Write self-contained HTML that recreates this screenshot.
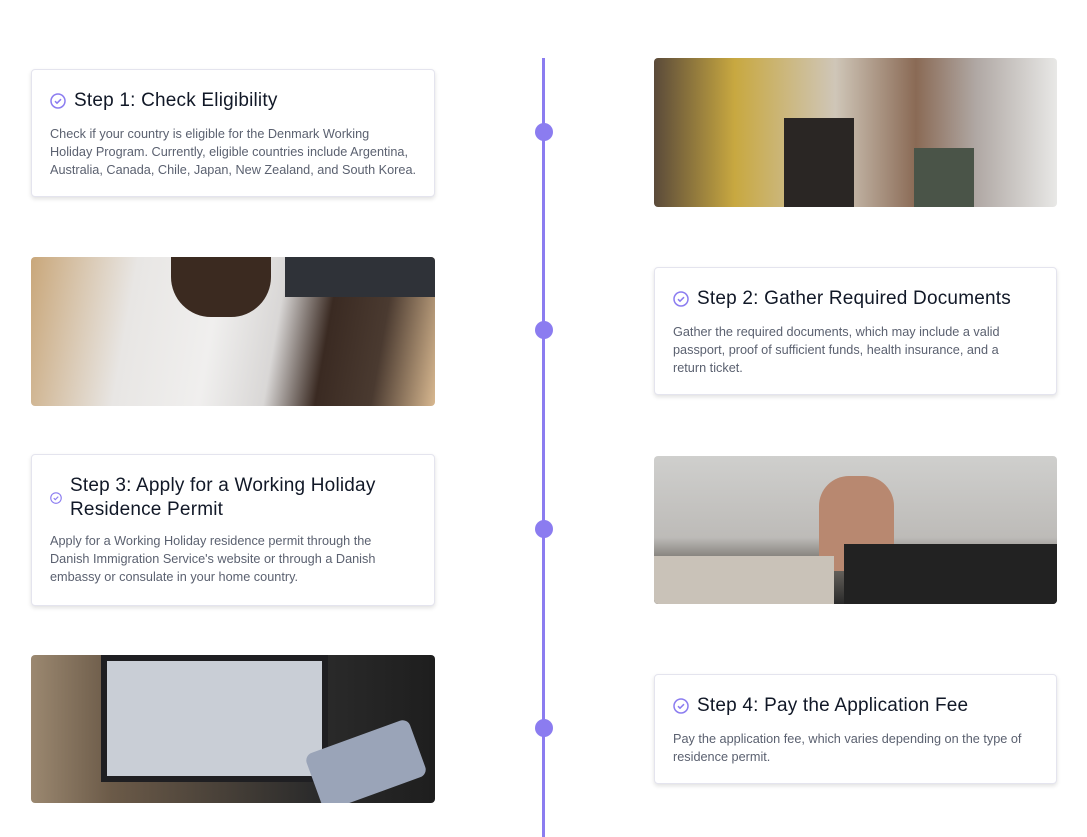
<!DOCTYPE html>
<html><head><style>
body{margin:0;background:#fff;width:1087px;height:837px;position:relative;overflow:hidden;font-family:"Liberation Sans",sans-serif}
.card{position:absolute;background:#fff;border:1px solid #e4e4ee;border-radius:4px;box-shadow:0 2px 4px rgba(0,0,0,.12);box-sizing:border-box;padding:0 14px 0 18px}
.t{display:flex;align-items:center;font-size:19px;letter-spacing:0.2px;color:#111827;line-height:24px}
.t svg{flex:none;margin-right:8px}
.p{font-size:12.7px;color:#5b6170;line-height:18px;margin-top:12px}
.img{position:absolute;border-radius:4px;overflow:hidden}
.line{position:absolute;left:542px;top:58px;width:3px;height:779px;background:#8b7cf0}
.dot{position:absolute;left:535px;width:18px;height:18px;border-radius:50%;background:#8b7cf0}
</style></head><body>
<div class="line"></div>
<div class="dot" style="top:123px"></div>
<div class="dot" style="top:321px"></div>
<div class="dot" style="top:520px"></div>
<div class="dot" style="top:719px"></div>

<div class="card" style="left:31px;top:69px;width:404px;height:128px;padding-top:19px">
<div class="t"><svg width="16" height="16" viewBox="0 0 16 16"><circle cx="8" cy="8" r="7" fill="none" stroke="#8b7cf0" stroke-width="1.5"/><path d="M5 8.2l2 2 4-4" fill="none" stroke="#8b7cf0" stroke-width="1.5"/></svg>Step 1: Check Eligibility</div>
<div class="p">Check if your country is eligible for the Denmark Working<br>Holiday Program. Currently, eligible countries include Argentina,<br>Australia, Canada, Chile, Japan, New Zealand, and South Korea.</div>
</div>

<div class="img" style="left:31px;top:257px;width:404px;height:149px;background:linear-gradient(100deg,#c9a77a 0%,#e8e6e4 25%,#f0efee 45%,#d9d7d6 60%,#3a2a22 72%,#4a3a30 85%,#d8b890 100%)">
<div style="position:absolute;left:140px;top:0;width:100px;height:60px;background:#3b2a20;border-radius:0 0 40px 40px"></div>
<div style="position:absolute;right:0;top:0;width:150px;height:40px;background:#2f3238"></div></div>

<div class="card" style="left:31px;top:454px;width:404px;height:152px;padding-top:19px">
<div class="t"><svg width="12" height="12" viewBox="0 0 16 16" style="margin-right:8px"><circle cx="8" cy="8" r="7" fill="none" stroke="#8b7cf0" stroke-width="1.5"/><path d="M5 8.2l2 2 4-4" fill="none" stroke="#8b7cf0" stroke-width="1.5"/></svg>Step 3: Apply for a Working Holiday Residence Permit</div>
<div class="p" style="margin-top:10px">Apply for a Working Holiday residence permit through the<br>Danish Immigration Service's website or through a Danish<br>embassy or consulate in your home country.</div>
</div>

<div class="img" style="left:31px;top:655px;width:404px;height:148px;background:linear-gradient(90deg,#9b8870 0%,#6b5a48 20%,#2b2b2b 70%,#1e1e1e 100%)">
<div style="position:absolute;left:70px;top:0;width:215px;height:115px;background:#c9ced6;border:6px solid #1f1f22"></div>
<div style="position:absolute;left:280px;top:80px;width:110px;height:60px;background:#9aa4b8;border-radius:8px;transform:rotate(-20deg)"></div></div>

<div class="img" style="left:654px;top:58px;width:403px;height:149px;background:linear-gradient(90deg,#5a4a3a 0%,#c8a840 20%,#cfc6b8 45%,#8a6a55 65%,#b0a8a4 80%,#e8e8e6 100%)">
<div style="position:absolute;left:130px;top:60px;width:70px;height:89px;background:#2a2624"></div>
<div style="position:absolute;left:260px;top:90px;width:60px;height:59px;background:#4a5448"></div></div>

<div class="card" style="left:654px;top:267px;width:403px;height:128px;padding-top:19px">
<div class="t"><svg width="16" height="16" viewBox="0 0 16 16"><circle cx="8" cy="8" r="7" fill="none" stroke="#8b7cf0" stroke-width="1.5"/><path d="M5 8.2l2 2 4-4" fill="none" stroke="#8b7cf0" stroke-width="1.5"/></svg>Step 2: Gather Required Documents</div>
<div class="p">Gather the required documents, which may include a valid<br>passport, proof of sufficient funds, health insurance, and a<br>return ticket.</div>
</div>

<div class="img" style="left:654px;top:456px;width:403px;height:148px;background:linear-gradient(180deg,#cfcfcd 0%,#bdbbb8 55%,#6a6660 75%,#2a2a2a 100%)">
<div style="position:absolute;left:165px;top:20px;width:75px;height:95px;background:#b88870;border-radius:30px 30px 10px 10px"></div>
<div style="position:absolute;left:190px;top:88px;width:213px;height:60px;background:#222"></div>
<div style="position:absolute;left:0;top:100px;width:180px;height:48px;background:#c9c2b8"></div></div>

<div class="card" style="left:654px;top:674px;width:403px;height:110px;padding-top:19px">
<div class="t"><svg width="16" height="16" viewBox="0 0 16 16"><circle cx="8" cy="8" r="7" fill="none" stroke="#8b7cf0" stroke-width="1.5"/><path d="M5 8.2l2 2 4-4" fill="none" stroke="#8b7cf0" stroke-width="1.5"/></svg>Step 4: Pay the Application Fee</div>
<div class="p">Pay the application fee, which varies depending on the type of<br>residence permit.</div>
</div>
</body></html>
